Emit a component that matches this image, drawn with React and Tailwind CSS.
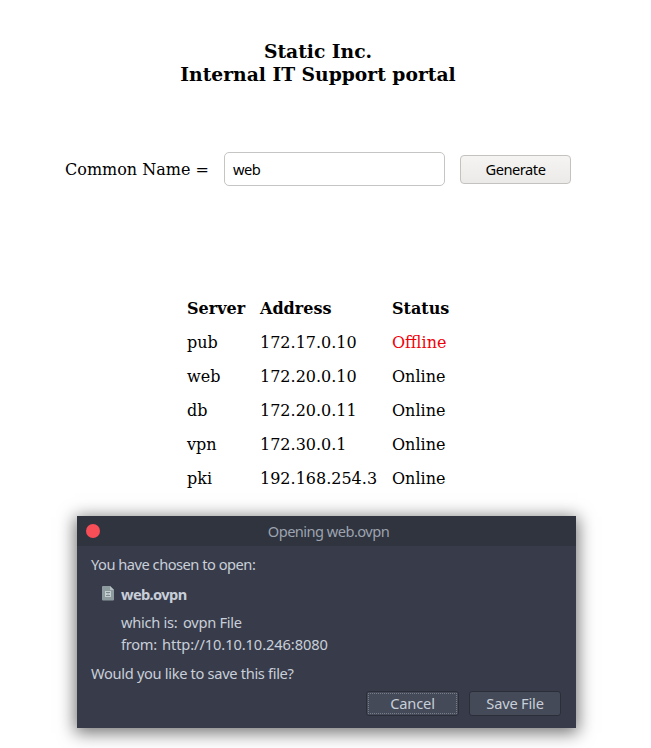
const servers = [
  { name: 'pub', address: '172.17.0.10', status: 'Offline' },
  { name: 'web', address: '172.20.0.10', status: 'Online' },
  { name: 'db', address: '172.20.0.11', status: 'Online' },
  { name: 'vpn', address: '172.30.0.1', status: 'Online' },
  { name: 'pki', address: '192.168.254.3', status: 'Online' },
];

function FileIcon() {
  return (
    <svg width="12" height="15" viewBox="0 0 12 15" className="mt-[3px] block">
      <path d="M1 0h7l4 4v9.500q0 1-1 1H1q-1 0-1-1V1q0-1 1-1z" fill="#8d9b9e" />
      <path d="M8 0l4 4H8z" fill="#b5c0c2" />
      <path d="M3 5h6v6H3z" fill="#c5cfd0" />
      <path d="M4 6h4v1H4zM4 9h4v1H4zM5.500 7.500h1v1h-1z" fill="#7c8b8e" />
    </svg>
  );
}

function ServerTable() {
  return (
    <table className="ml-[187px] mt-[106px] w-[264px] table-fixed text-left text-base leading-[34px]">
      <colgroup>
        <col className="w-[73px]" />
        <col className="w-[132px]" />
        <col />
      </colgroup>
      <thead>
        <tr className="h-[34px]">
          <th>Server</th>
          <th>Address</th>
          <th>Status</th>
        </tr>
      </thead>
      <tbody>
        {servers.map((s) => (
          <tr key={s.name} className="h-[34px]">
            <td>{s.name}</td>
            <td>{s.address}</td>
            <td className={s.status === 'Offline' ? 'text-[#f00008]' : ''}>{s.status}</td>
          </tr>
        ))}
      </tbody>
    </table>
  );
}

function SaveDialog() {
  return (
    <section className="ml-[77px] mt-[20px] h-[212px] w-[499px] bg-[#383c4a] font-['Noto_Sans',sans-serif] text-[14.67px] text-[#c8cfd9] shadow-[0_3px_16px_2px_rgba(0,0,0,0.55)]">
      <header className="flex h-[30px] items-center bg-[#2f343f] pl-[9px]">
        <span className="size-[14px] rounded-full bg-[#f84e57]" />
        <h2 className="w-[457px] pb-px text-center tracking-[-0.55px] text-[#9da3af]">Opening web.ovpn</h2>
      </header>
      <div className="px-[14px] leading-[22px]">
        <p className="pt-[7px] tracking-[-0.5px]">You have chosen to open:</p>
        <div className="mt-[8px] flex h-[22px] pl-[11px]">
          <FileIcon />
          <b className="ml-[7px] tracking-[-0.65px]">web.ovpn</b>
        </div>
        <div className="mt-[6px] pl-[30px]">
          <p className="flex">
            <span className="w-[62px] tracking-[-0.3px]">which is:</span>
            <span className="tracking-[-0.3px]">ovpn File</span>
          </p>
          <p className="flex">
            <span className="w-[41px] tracking-[-0.3px]">from:</span>
            <span className="tracking-[-0.1px]">http://10.10.10.246:8080</span>
          </p>
        </div>
        <p className="mt-[7px] tracking-[-0.33px]">Would you like to save this file?</p>
        <div className="mt-[7px] flex justify-end gap-[10px] pr-px tracking-[-0.2px]">
          <button className="h-[25px] w-[93px] rounded-[3px] border border-[#2b2e39] bg-[#444a58] p-px">
            <span className="flex h-full items-center justify-center border border-dotted border-[#787d89] pb-[2px]">Cancel</span>
          </button>
          <button className="flex h-[25px] w-[92px] items-center justify-center rounded-[3px] border border-[#2b2e39] bg-[#444a58] pb-[2px]">Save File</button>
        </div>
      </div>
    </section>
  );
}

export default function App() {
  return (
    <main className="h-[748px] w-[651px] overflow-hidden bg-white font-['DejaVu_Serif',serif] text-black">
      <h1 className="w-[636px] pt-[40px] text-center text-[18.72px] font-bold leading-[23px]">
        Static Inc.
        <br />
        Internal IT Support portal
      </h1>
      <form className="mt-[66px] flex h-[34px] items-center pl-[65px]">
        <label className="w-[159px] pt-[2px]">Common Name =</label>
        <input
          className="h-[34px] w-[221px] rounded-[5px] border border-[#c5c5c3] bg-white px-[8px] font-['Noto_Sans',sans-serif] text-[14.67px] tracking-[-0.5px]"
          defaultValue="web"
        />
        <button
          type="button"
          className="ml-[15px] mt-px h-[29px] w-[111px] rounded-[4px] border border-[#c4c2bf] bg-linear-to-b from-[#f5f4f3] to-[#ebeae8] pb-[2px] font-['Noto_Sans',sans-serif] text-[14.67px] tracking-[-0.5px]"
        >
          Generate
        </button>
      </form>
      <ServerTable />
      <SaveDialog />
    </main>
  );
}
